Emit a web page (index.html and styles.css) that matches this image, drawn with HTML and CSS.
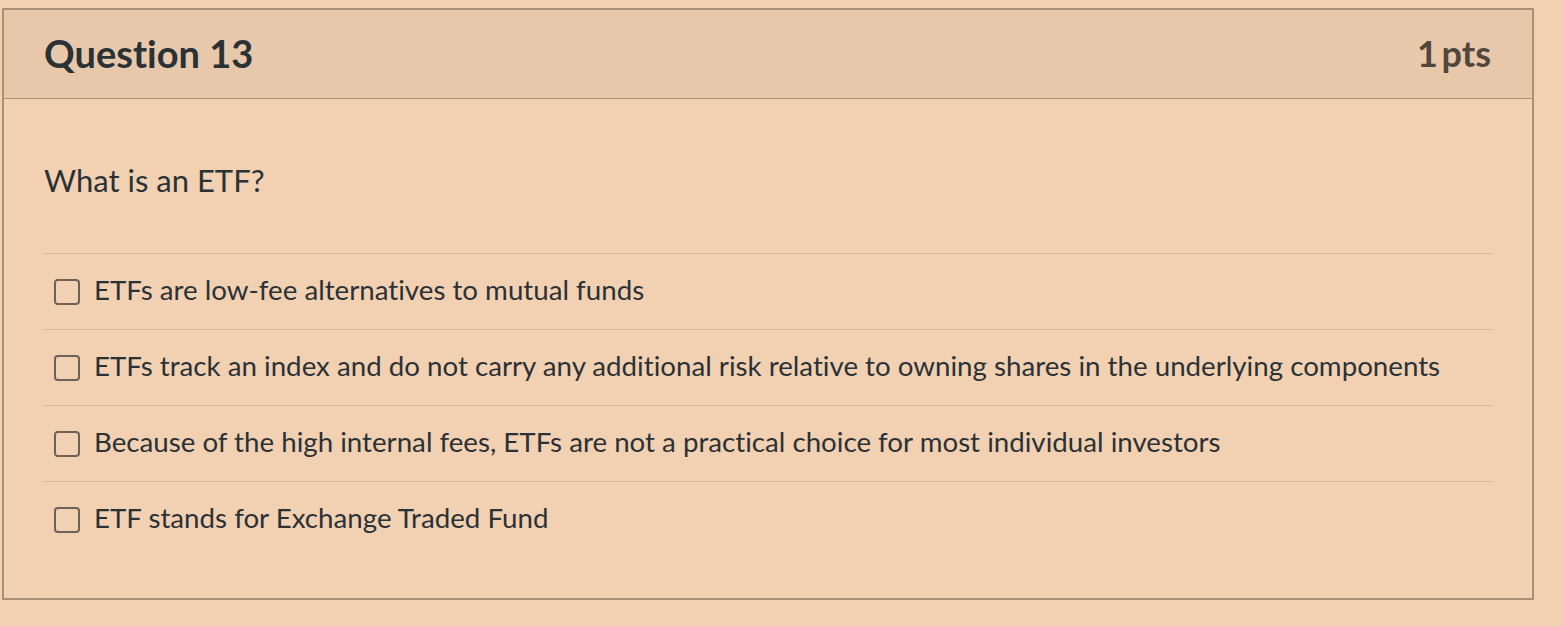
FILE: index.html
```html
<!DOCTYPE html>
<html>
<head>
<meta charset="utf-8">
<link rel="stylesheet" href="styles.css">
</head>
<body>
<div class="question">
  <div class="question-header">
    <h2 class="question-title">Question 13</h2>
    <span class="question-points">1 pts</span>
  </div>
  <div class="question-body">
    <p class="question-text">What is an ETF?</p>
    <ul class="answers">
      <li class="answer"><span class="checkbox"></span><span class="answer-label">ETFs are low-fee alternatives to mutual funds</span></li>
      <li class="answer"><span class="checkbox"></span><span class="answer-label">ETFs track an index and do not carry any additional risk relative to owning shares in the underlying components</span></li>
      <li class="answer"><span class="checkbox"></span><span class="answer-label">Because of the high internal fees, ETFs are not a practical choice for most individual investors</span></li>
      <li class="answer"><span class="checkbox"></span><span class="answer-label">ETF stands for Exchange Traded Fund</span></li>
    </ul>
  </div>
</div>
</body>
</html>
```

FILE: styles.css
```css
html, body {
  margin: 0;
  padding: 0;
  background: #f2d1b3;
  font-family: Lato, "Noto Sans", sans-serif;
  font-variant-ligatures: none;
  font-feature-settings: "liga" 0, "clig" 0;
  color: #2b3236;
}

.question {
  margin: 8px 0 0 2px;
  width: 1528px;
  height: 588px;
  border: 2px solid #a8917a;
  background: #f2d1b3;
}

.question-header {
  display: flex;
  align-items: center;
  justify-content: space-between;
  height: 88px;
  padding: 0 41px 0 40px;
  background: #e8c8ab;
  border-bottom: 1px solid #a8917a;
}

.question-title {
  margin: 0;
  font-size: 38px;
  font-weight: 700;
  line-height: 1.2;
  color: #2b3236;
}

.question-points {
  font-size: 36px;
  font-weight: 700;
  line-height: 1.2;
  word-spacing: -5px;
  color: #51473c;
}

.question-body {
  padding: 63px 40px 0 40px;
}

.question-text {
  margin: 0 0 54px 0;
  font-size: 31px;
  line-height: 1.2;
}

.answers {
  list-style: none;
  margin: 0;
  padding: 0;
}

.answer {
  display: flex;
  align-items: center;
  box-sizing: border-box;
  height: 76px;
  padding-bottom: 4px;
  border-top: 1px solid #d6b698;
}

.checkbox {
  box-sizing: border-box;
  width: 26px;
  height: 26px;
  margin: 4px 14px 0 10px;
  border: 2px solid #6d6257;
  border-radius: 4px;
  background: transparent;
  flex: none;
}

.answer-label {
  font-size: 27.7px;
  line-height: 1.2;
}
```
